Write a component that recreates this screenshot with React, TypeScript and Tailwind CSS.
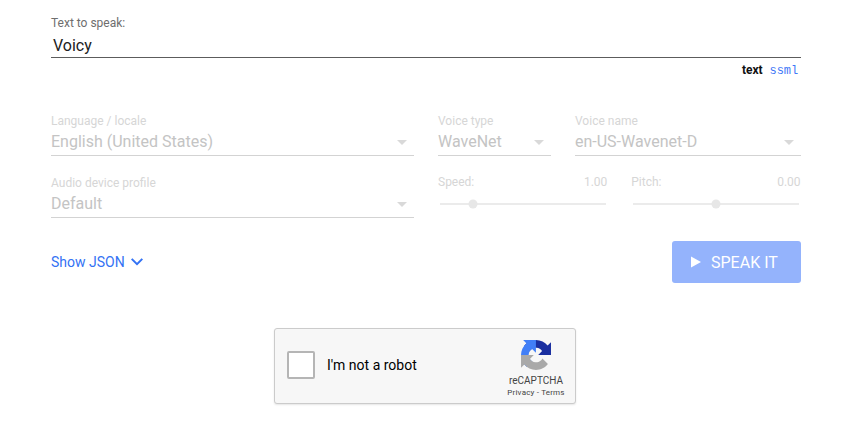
type SelectProps = { label: string; value: string; className: string };

function SelectField({ label, value, className }: SelectProps) {
  return (
    <div className={`${className} h-[43px] shrink-0 border-b border-[#d3d3d3]`}>
      <div className="h-4 text-[12px] leading-4 text-[#d6d6d6]">{label}</div>
      <div className="flex h-[26px] items-center justify-between pr-[7px]">
        <span className="text-[16px] leading-[26px] text-[#c4c4c4]">{value}</span>
        <svg width="10" height="5" viewBox="0 0 10 5" className="mt-px" fill="#d9d9d9">
          <path d="M0 0h10L5 5z" />
        </svg>
      </div>
    </div>
  );
}

type SliderProps = { label: string; value: string; percent: number };

function SliderField({ label, value, percent }: SliderProps) {
  return (
    <div className="w-[169.3px]">
      <div className="flex h-4 justify-between text-[12px] leading-4 text-[#d6d6d6]">
        <span>{label}</span>
        <span>{value}</span>
      </div>
      <div className="relative mt-[13px] ml-[2px] h-[2px] w-[165.6px] bg-[#ebebeb]">
        <div
          className="absolute top-1/2 size-[9px] -translate-x-1/2 -translate-y-1/2 rounded-full bg-[#e7e7e7]"
          style={{ left: `${percent}%` }}
        />
      </div>
    </div>
  );
}

function RecaptchaLogo() {
  return (
    <svg width="30" height="30" viewBox="0 0 64 64">
      <path fill="#1a2fa0" d="M64 31.955l-.033-1.37V4.687l-7.16 7.16C50.948 4.674 42.033.093 32.05.093c-10.4 0-19.622 4.96-25.458 12.64l11.736 11.86a15.55 15.55 0 0 1 4.754-5.334c2.05-1.6 4.952-2.906 8.968-2.906.485 0 .86.057 1.135.163 4.976.393 9.288 3.14 11.828 7.124l-8.307 8.307L64 31.953" />
      <path fill="#417ff7" d="M31.862.094l-1.37.033H4.594l7.16 7.16C4.58 13.147 0 22.06 0 32.046c0 10.4 4.96 19.622 12.64 25.458L24.5 45.768a15.55 15.55 0 0 1-5.334-4.754c-1.6-2.05-2.906-4.952-2.906-8.968 0-.485.057-.86.163-1.135.393-4.976 3.14-9.288 7.124-11.828l8.307 8.307L31.86.095" />
      <path fill="#a9a9a9" d="M.001 32.045l.033 1.37v25.898l7.16-7.16c5.86 7.173 14.774 11.754 24.76 11.754 10.4 0 19.622-4.96 25.458-12.64l-11.736-11.86a15.55 15.55 0 0 1-4.754 5.334c-2.05 1.6-4.952 2.906-8.968 2.906-.485 0-.86-.057-1.135-.163-4.976-.393-9.288-3.14-11.828-7.124l8.307-8.307c-10.522.04-22.4.066-27.295-.005" />
    </svg>
  );
}

export default function App() {
  return (
    <div className="h-[425px] w-[860px] bg-white pt-[15px] pl-[51px] font-['Roboto',sans-serif]">
      <main className="w-[750px]">
        <div className="h-[43px] border-b border-[#5c5c5c]">
          <div className="h-4 text-[12px] leading-4 text-[#6e6e6e]">Text to speak:</div>
          <div className="pl-[2px] text-[16px] leading-[29px] text-[#212121]">Voicy</div>
        </div>
        <div className="flex h-[26px] items-center justify-end gap-[7px] pr-[3px] text-[12px]">
          <span className="pb-[2px] text-[12px] font-bold text-[#111]">text</span>
          <span className="font-['Liberation_Mono',monospace] tracking-[-0.1px] text-[#3f78f7]">ssml</span>
        </div>

        <div className="mt-[29px] flex gap-6">
          <SelectField className="w-[363px]" label="Language / locale" value="English (United States)" />
          <SelectField className="w-[113px]" label="Voice type" value="WaveNet" />
          <SelectField className="w-[226px]" label="Voice name" value="en-US-Wavenet-D" />
        </div>
        <div className="mt-[19px] flex gap-6">
          <SelectField className="w-[363px]" label="Audio device profile" value="Default" />
          <div className="-mt-px flex gap-6">
            <SliderField label="Speed:" value="1.00" percent={20} />
            <SliderField label="Pitch:" value="0.00" percent={49.7} />
          </div>
        </div>

        <div className="mt-[23px] flex h-[42px] items-center justify-between">
          <button className="flex items-center gap-[6px] text-[14px] text-[#3372f4]">
            Show JSON
            <svg width="12" height="8" viewBox="0 0 12 8" fill="none" stroke="#3372f4" strokeWidth="2">
              <path d="M.7.9 6 6.2 11.3.9" />
            </svg>
          </button>
          <button className="flex h-[42px] w-[129px] items-center gap-[10px] rounded-[3px] bg-[#94b3fc] pl-[19px] text-[16px] text-white">
            <svg width="10" height="12" viewBox="0 0 10 12" fill="white">
              <path d="M0 .5v11L10 6z" />
            </svg>
            <span className="pt-[2px]">SPEAK IT</span>
          </button>
        </div>

        <div className="mt-[45px] ml-[223px] flex h-[76px] w-[302px] items-center rounded-[3px] border border-[#cbcbcb] bg-[#f7f7f7] pl-3 shadow-[0_1px_2px_rgba(0,0,0,0.1)]">
          <div className="mt-[-2px] size-7 rounded-[2px] border-2 border-[#b5b5b5] bg-white" />
          <span className="ml-3 mt-[-2px] w-[170px] text-[14px] leading-[17px] text-black">I'm not a robot</span>
          <div className="ml-[8px] flex h-full w-[62px] flex-col items-center pt-[11px] text-[#444]">
            <RecaptchaLogo />
            <div className="mt-[6px] text-[10px] leading-[10px]">reCAPTCHA</div>
            <div className="mt-[2px] text-[8px] leading-[10px] tracking-[0.2px] whitespace-nowrap">Privacy - Terms</div>
          </div>
        </div>
      </main>
    </div>
  );
}
